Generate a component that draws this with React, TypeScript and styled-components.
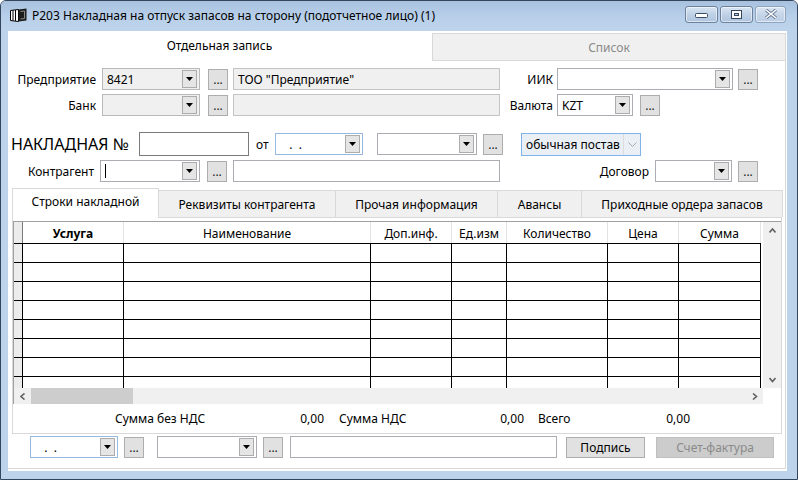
import React from 'react'
import styled, { createGlobalStyle } from 'styled-components'

const GlobalStyle = createGlobalStyle`
  * { box-sizing: border-box; }
  html, body { margin: 0; padding: 0; background: #fff; }
  body {
    font-family: 'Segoe UI', 'Noto Sans', 'Liberation Sans', sans-serif;
    font-size: 12px;
    color: #000;
  }
`

type Tone = 'white' | 'gray' | 'date' | 'select'

const comboBorder: Record<Tone, string> = {
  white: '#abadb3',
  gray: '#b9b9b9',
  date: '#97b9df',
  select: '#7eb4ea',
}

const comboBg: Record<Tone, string> = {
  white: '#fff',
  gray: '#f0f0f0',
  date: '#fff',
  select: '#eaeff5',
}

const cols = [
  { title: '', w: 9, kind: 'ind' },
  { title: 'Услуга', w: 101, kind: 'data', bold: true },
  { title: 'Наименование', w: 247, kind: 'data' },
  { title: 'Доп.инф.', w: 81, kind: 'data' },
  { title: 'Ед.изм', w: 55, kind: 'data' },
  { title: 'Количество', w: 101, kind: 'data' },
  { title: 'Цена', w: 71, kind: 'data' },
  { title: 'Сумма', w: 82, kind: 'data' },
  { title: '', w: 2, kind: 'tail' },
]

const innerTabs = [
  { label: 'Строки накладной', w: 147 },
  { label: 'Реквизиты контрагента', w: 178 },
  { label: 'Прочая информация', w: 163 },
  { label: 'Авансы', w: 85 },
  { label: 'Приходные ордера запасов', w: 202 },
]

export default function App(): JSX.Element {
  return (
    <>
      <GlobalStyle />
      <Window>
        <TitleBar>
          <BookIcon />
          <TitleText>Р203 Накладная на отпуск запасов на сторону (подотчетное лицо) (1)</TitleText>
          <WinButtons>
            <WinBtn $w={33}>
              <svg width='13' height='8' viewBox='0 0 13 8'>
                <rect x='0.5' y='3.5' width='12' height='4' rx='1' fill='#fff' stroke='#3a4b62' />
              </svg>
            </WinBtn>
            <WinBtn $w={33}>
              <svg width='11' height='9' viewBox='0 0 11 9'>
                <rect x='0.5' y='0.5' width='10' height='8' fill='#fff' stroke='#34455c' />
                <rect x='3.5' y='3.5' width='4' height='2' fill='#b9cde4' stroke='#34455c' />
              </svg>
            </WinBtn>
            <WinBtn $w={31} $light>
              <svg width='14' height='10' viewBox='0 0 14 10'>
                <path d='M2 1 L12 9 M12 1 L2 9' stroke='#6b7d94' strokeWidth='3.4' />
                <path d='M2 1 L12 9 M12 1 L2 9' stroke='#fff' strokeWidth='1.6' />
              </svg>
            </WinBtn>
          </WinButtons>
        </TitleBar>

        <Client>
          <TopTabs>
            <TopTab $active>Отдельная запись</TopTab>
            <TopTab>Список</TopTab>
          </TopTabs>

          <Pane>
            <FormRow $mt={7}>
              <Label $w={94}>Предприятие</Label>
              <Combo $w={98} $tone='gray' text='8421' />
              <Dots $ml={8} />
              <Field $w={267} $ml={5} $gray>ТОО "Предприятие"</Field>
              <Label $w={57} $pr={4}>ИИК</Label>
              <Combo $w={176} $tone='white' />
              <Dots $ml={5} />
            </FormRow>

            <FormRow $mt={4}>
              <Label $w={94}>Банк</Label>
              <Combo $w={98} $tone='gray' />
              <Dots $ml={8} />
              <Field $w={267} $ml={5} $gray />
              <Label $w={57} $pr={4}>Валюта</Label>
              <Combo $w={76} $tone='white' text='KZT' />
              <Dots $ml={7} />
            </FormRow>

            <FormRow $mt={16} $h={24}>
              <BigLabel>НАКЛАДНАЯ №</BigLabel>
              <NumberInput />
              <Label $w={26} $pr={0} $align='left' $pl={7}>от</Label>
              <Combo $w={88} $tone='date' text='   .  .' />
              <Combo $w={100} $tone='white' $ml={14} />
              <Dots $ml={6} />
              <SelectBox>
                <span>обычная постав</span>
                <SelectArrow>
                  <svg width='9' height='5' viewBox='0 0 9 5'>
                    <polyline points='0.5,0.5 4.5,4.5 8.5,0.5' fill='none' stroke='#a9a9a9' />
                  </svg>
                </SelectArrow>
              </SelectBox>
            </FormRow>

            <FormRow $mt={4}>
              <Label $w={92}>Контрагент</Label>
              <Combo $w={100} $tone='white' caret />
              <Dots $ml={7} />
              <Field $w={267} $ml={6} />
              <Label $w={155} $pr={6}>Договор</Label>
              <Combo $w={77} $tone='white' />
              <Dots $ml={6} />
            </FormRow>

            <InnerTabStrip>
              {innerTabs.map((t, i) => (
                <InnerTab key={t.label} $w={t.w} $active={i === 0}>
                  {t.label}
                </InnerTab>
              ))}
            </InnerTabStrip>

            <InnerPane>
              <GridBox>
                <GridTable>
                  <Table style={{ gridTemplateColumns: cols.map((c) => `${c.w}px`).join(' ') }}>
                    {cols.map((c, i) => (
                      <HeadCell key={`h${i}`} $kind={c.kind} $bold={c.bold}>
                        {c.title}
                      </HeadCell>
                    ))}
                    {Array.from({ length: 8 }).map((_, r) =>
                      cols.map((c, i) => <BodyCell key={`r${r}c${i}`} $kind={c.kind} />),
                    )}
                  </Table>
                </GridTable>
                <VScroll>
                  <ScrollArrow>
                    <Chevron dir='up' />
                  </ScrollArrow>
                  <ScrollArrow>
                    <Chevron dir='down' />
                  </ScrollArrow>
                </VScroll>
                <HScroll>
                  <ScrollArrow>
                    <Chevron dir='left' />
                  </ScrollArrow>
                  <Thumb />
                  <TrackFill />
                  <ScrollArrow>
                    <Chevron dir='right' />
                  </ScrollArrow>
                </HScroll>
                <Corner />
              </GridBox>

              <Totals>
                <TotalLabel $w={120}>Сумма без НДС</TotalLabel>
                <TotalValue $w={89}>0,00</TotalValue>
                <TotalLabel $w={110} $ml={15}>Сумма НДС</TotalLabel>
                <TotalValue $w={75}>0,00</TotalValue>
                <TotalLabel $w={80} $ml={14}>Всего</TotalLabel>
                <TotalValue $w={72}>0,00</TotalValue>
              </Totals>
            </InnerPane>

            <FormRow $mt={2} $ml={22}>
              <Combo $w={88} $tone='date' text='   .  .' />
              <Dots $ml={6} />
              <Combo $w={100} $tone='white' $ml={13} />
              <Dots $ml={6} />
              <Field $w={267} $ml={7} />
              <Button $w={79} $ml={9}>Подпись</Button>
              <Button $w={118} $ml={11} $disabled>Счет-фактура</Button>
            </FormRow>
          </Pane>
        </Client>
      </Window>
    </>
  )
}

function BookIcon() {
  return (
    <IconBox>
      <svg width='17' height='14' viewBox='0 0 17 14'>
        <path d='M0.5 2.5 L8.5 1.5 L8.5 13.5 L0.5 12.5 Z' fill='#fff' stroke='#000' />
        <path d='M3 2.3 V12.6 M5.5 2 V12.9' stroke='#000' />
        <path d='M8.5 1.5 L16.5 0.5 L16.5 12.5 L8.5 13.5 Z' fill='#1c1c1c' />
        <path d='M10.5 3.5 L14.5 3 L14.5 10.5 L10.5 11' fill='none' stroke='#8a8a8a' />
      </svg>
    </IconBox>
  )
}

function Chevron({ dir }: { dir: 'up' | 'down' | 'left' | 'right' }) {
  const pts = {
    up: '0.5,4.5 3.5,1 6.5,4.5',
    down: '0.5,1 3.5,4.5 6.5,1',
    left: '4.5,0.5 1,3.5 4.5,6.5',
    right: '1,0.5 4.5,3.5 1,6.5',
  }[dir]
  const vertical = dir === 'up' || dir === 'down'
  return (
    <svg width={vertical ? 7 : 6} height={vertical ? 6 : 7} viewBox={vertical ? '0 0 7 6' : '0 0 6 7'}>
      <polyline points={pts} fill='none' stroke='#606060' strokeWidth='1.6' />
    </svg>
  )
}

function Combo({
  $w,
  $tone,
  $ml,
  text,
  caret,
}: {
  $w: number
  $tone: Tone
  $ml?: number
  text?: string
  caret?: boolean
}) {
  return (
    <ComboBox $w={$w} $tone={$tone} $ml={$ml}>
      <ComboText>
        {caret && <Caret />}
        {text}
      </ComboText>
      <DropBtn>
        <svg width='7' height='4' viewBox='0 0 7 4'>
          <polygon points='0,0 7,0 3.5,4' fill='#000' />
        </svg>
      </DropBtn>
    </ComboBox>
  )
}

function Dots({ $ml }: { $ml?: number }) {
  return <DotsBtn $ml={$ml}>...</DotsBtn>
}

const Window = styled.div`
  width: 798px;
  height: 480px;
  display: flex;
  flex-direction: column;
  border: 1px solid #34465c;
  border-radius: 6px 6px 0 0;
  background: #bcd3eb;
  overflow: hidden;
`

const TitleBar = styled.div`
  height: 30px;
  flex: none;
  display: flex;
  align-items: center;
  padding: 0 11px 2px 9px;
  background: linear-gradient(#a7c1de, #b9d0ea 55%, #bed4ec);
`

const IconBox = styled.div`
  width: 17px;
  height: 14px;
  display: flex;
  margin-right: 5px;
`

const TitleText = styled.div`
  flex: 1;
  font-size: 12px;
  color: #000;
  white-space: nowrap;
`

const WinButtons = styled.div`
  display: flex;
  gap: 2px;
  margin-top: -2px;
`

const WinBtn = styled.div<{ $w: number; $light?: boolean }>`
  width: ${(p) => p.$w}px;
  height: 17px;
  display: flex;
  align-items: center;
  justify-content: center;
  border: 1px solid ${(p) => (p.$light ? '#8ea3bd' : '#6c819c')};
  border-radius: 3px;
  background: ${(p) =>
    p.$light
      ? 'linear-gradient(#dbe6f3, #c6d6e9 50%, #bccee4)'
      : 'linear-gradient(#d9e5f2, #bfd1e6 50%, #aec4de)'};
  box-shadow: inset 0 0 0 1px rgba(255, 255, 255, 0.55);
`

const Client = styled.div`
  margin: 0 10px 0 7px;
  height: 440px;
  flex: none;
  background: #fff;
  display: flex;
  flex-direction: column;
`

const TopTabs = styled.div`
  height: 30px;
  display: flex;
  align-items: flex-start;
`

const TopTab = styled.div<{ $active?: boolean }>`
  width: ${(p) => (p.$active ? 423 : 354)}px;
  height: ${(p) => (p.$active ? 30 : 28)}px;
  margin: ${(p) => (p.$active ? '0' : '2px 0 0 1px')};
  display: flex;
  align-items: center;
  justify-content: center;
  padding-bottom: ${(p) => (p.$active ? 2 : 0)}px;
  background: ${(p) => (p.$active ? '#fff' : '#f0f0f0')};
  border: ${(p) => (p.$active ? 'none' : '1px solid #d9d9d9')};
  color: ${(p) => (p.$active ? '#000' : '#8a8a8a')};
`

const Pane = styled.div`
  width: 778px;
  flex: 1;
  border-right: 1px solid #d9d9d9;
  border-bottom: 1px solid #d9d9d9;
  margin-bottom: 2px;
  display: flex;
  flex-direction: column;
`

const FormRow = styled.div<{ $mt?: number; $ml?: number; $h?: number }>`
  display: flex;
  align-items: center;
  height: ${(p) => p.$h ?? 22}px;
  margin-top: ${(p) => p.$mt ?? 0}px;
  margin-left: ${(p) => p.$ml ?? 0}px;
  flex: none;
`

const Label = styled.div<{ $w: number; $pr?: number; $pl?: number; $align?: string }>`
  width: ${(p) => p.$w}px;
  flex: none;
  padding-right: ${(p) => p.$pr ?? 6}px;
  padding-left: ${(p) => p.$pl ?? 0}px;
  text-align: ${(p) => p.$align ?? 'right'};
  white-space: nowrap;
`

const BigLabel = styled.div`
  width: 128px;
  margin-left: 3px;
  font-size: 16px;
  white-space: nowrap;
`

const NumberInput = styled.div`
  width: 110px;
  height: 24px;
  border: 1px solid #7a7a7a;
  background: #fff;
`

const ComboBox = styled.div<{ $w: number; $tone: Tone; $ml?: number }>`
  width: ${(p) => p.$w}px;
  height: 22px;
  flex: none;
  margin-left: ${(p) => p.$ml ?? 0}px;
  display: flex;
  align-items: stretch;
  padding: 1px 2px 1px 1px;
  border: 1px solid ${(p) => comboBorder[p.$tone]};
  background: ${(p) => comboBg[p.$tone]};
`

const ComboText = styled.div`
  flex: 1;
  display: flex;
  align-items: center;
  padding-left: 3px;
  white-space: pre;
  overflow: hidden;
`

const Caret = styled.span`
  width: 1px;
  height: 14px;
  background: #000;
`

const DropBtn = styled.div`
  width: 15px;
  display: flex;
  align-items: center;
  justify-content: center;
  background: #e5e5e5;
  border: 1px solid #acacac;
`

const DotsBtn = styled.div<{ $ml?: number }>`
  width: 20px;
  height: 21px;
  flex: none;
  margin-left: ${(p) => p.$ml ?? 0}px;
  display: flex;
  align-items: flex-end;
  justify-content: center;
  padding-bottom: 3px;
  line-height: 12px;
  background: #e1e1e1;
  border: 1px solid #adadad;
  color: #222;
`

const Field = styled.div<{ $w: number; $ml?: number; $gray?: boolean }>`
  width: ${(p) => p.$w}px;
  height: 22px;
  flex: none;
  margin-left: ${(p) => p.$ml ?? 0}px;
  display: flex;
  align-items: center;
  padding-left: 4px;
  white-space: nowrap;
  background: ${(p) => (p.$gray ? '#f0f0f0' : '#fff')};
  border: 1px solid ${(p) => (p.$gray ? '#c4c4c4' : '#abadb3')};
`

const SelectBox = styled.div`
  width: 120px;
  height: 23px;
  margin-left: 18px;
  display: flex;
  align-items: center;
  padding-left: 4px;
  background: #eaeff5;
  border: 1px solid #7eb4ea;
  white-space: nowrap;
  span {
    flex: 1;
    overflow: hidden;
  }
`

const SelectArrow = styled.div`
  width: 17px;
  height: 100%;
  display: flex;
  align-items: center;
  justify-content: center;
  border-left: 1px solid #dcdcdc;
`

const InnerTabStrip = styled.div`
  display: flex;
  align-items: flex-end;
  height: 29px;
  margin: 6px 0 0 4px;
  position: relative;
  z-index: 1;
`

const InnerTab = styled.div<{ $w: number; $active?: boolean }>`
  width: ${(p) => p.$w}px;
  height: ${(p) => (p.$active ? 30 : 27)}px;
  margin-bottom: ${(p) => (p.$active ? -1 : 0)}px;
  display: flex;
  align-items: center;
  justify-content: center;
  padding-bottom: ${(p) => (p.$active ? 4 : 0)}px;
  background: ${(p) => (p.$active ? '#fff' : '#f0f0f0')};
  border: 1px solid #d9d9d9;
  border-bottom: none;
  margin-right: -1px;
  white-space: nowrap;
`

const InnerPane = styled.div`
  width: 770px;
  height: 217px;
  margin-left: 4px;
  border: 1px solid #d9d9d9;
  background: #fff;
  display: flex;
  flex-direction: column;
  padding-top: 3px;
`

const GridBox = styled.div`
  height: 183px;
  display: grid;
  grid-template-columns: 1fr 18px;
  grid-template-rows: 1fr 16px;
  border-top: 1px solid #a0a0a0;
  border-left: 1px solid #a0a0a0;
`

const GridTable = styled.div`
  overflow: hidden;
  background: #fff;
`

const Table = styled.div`
  display: grid;
  grid-template-rows: 21px;
  grid-auto-rows: 19px;
`

const HeadCell = styled.div<{ $kind: string; $bold?: boolean }>`
  display: flex;
  align-items: center;
  justify-content: center;
  white-space: nowrap;
  overflow: hidden;
  font-weight: ${(p) => (p.$bold ? 700 : 400)};
  background: ${(p) => (p.$kind === 'ind' ? '#ececec' : '#fff')};
  border-right: 1px solid
    ${(p) => (p.$kind === 'ind' ? '#7a7a7a' : p.$kind === 'tail' ? 'transparent' : '#e3e3e3')};
  padding-top: 1px;
`

const BodyCell = styled.div<{ $kind: string }>`
  background: ${(p) => (p.$kind === 'ind' ? '#ececec' : '#fff')};
  border-top: 1px solid ${(p) => (p.$kind === 'tail' ? 'transparent' : '#000')};
  border-right: 1px solid ${(p) => (p.$kind === 'tail' ? 'transparent' : '#000')};
`

const VScroll = styled.div`
  background: #f0f0f0;
  display: flex;
  flex-direction: column;
  justify-content: space-between;
`

const HScroll = styled.div`
  background: #f0f0f0;
  display: flex;
  align-items: stretch;
`

const ScrollArrow = styled.div`
  width: 17px;
  height: 17px;
  flex: none;
  display: flex;
  align-items: center;
  justify-content: center;
  align-self: center;
`

const Thumb = styled.div`
  width: 102px;
  margin: 0;
  background: #cdcdcd;
`

const TrackFill = styled.div`
  flex: 1;
`

const Corner = styled.div`
  background: #fff;
`

const Totals = styled.div`
  flex: 1;
  display: flex;
  align-items: center;
  padding: 0 0 0 102px;
`

const TotalLabel = styled.div<{ $w: number; $ml?: number }>`
  width: ${(p) => p.$w}px;
  margin-left: ${(p) => p.$ml ?? 0}px;
  white-space: nowrap;
`

const TotalValue = styled.div<{ $w: number }>`
  width: ${(p) => p.$w}px;
  text-align: right;
`

const Button = styled.div<{ $w: number; $ml?: number; $disabled?: boolean }>`
  width: ${(p) => p.$w}px;
  height: 21px;
  margin-left: ${(p) => p.$ml ?? 0}px;
  display: flex;
  align-items: center;
  justify-content: center;
  background: ${(p) => (p.$disabled ? '#cccccc' : '#e1e1e1')};
  border: 1px solid ${(p) => (p.$disabled ? '#bfbfbf' : '#adadad')};
  color: ${(p) => (p.$disabled ? '#8a8a8a' : '#000')};
`
